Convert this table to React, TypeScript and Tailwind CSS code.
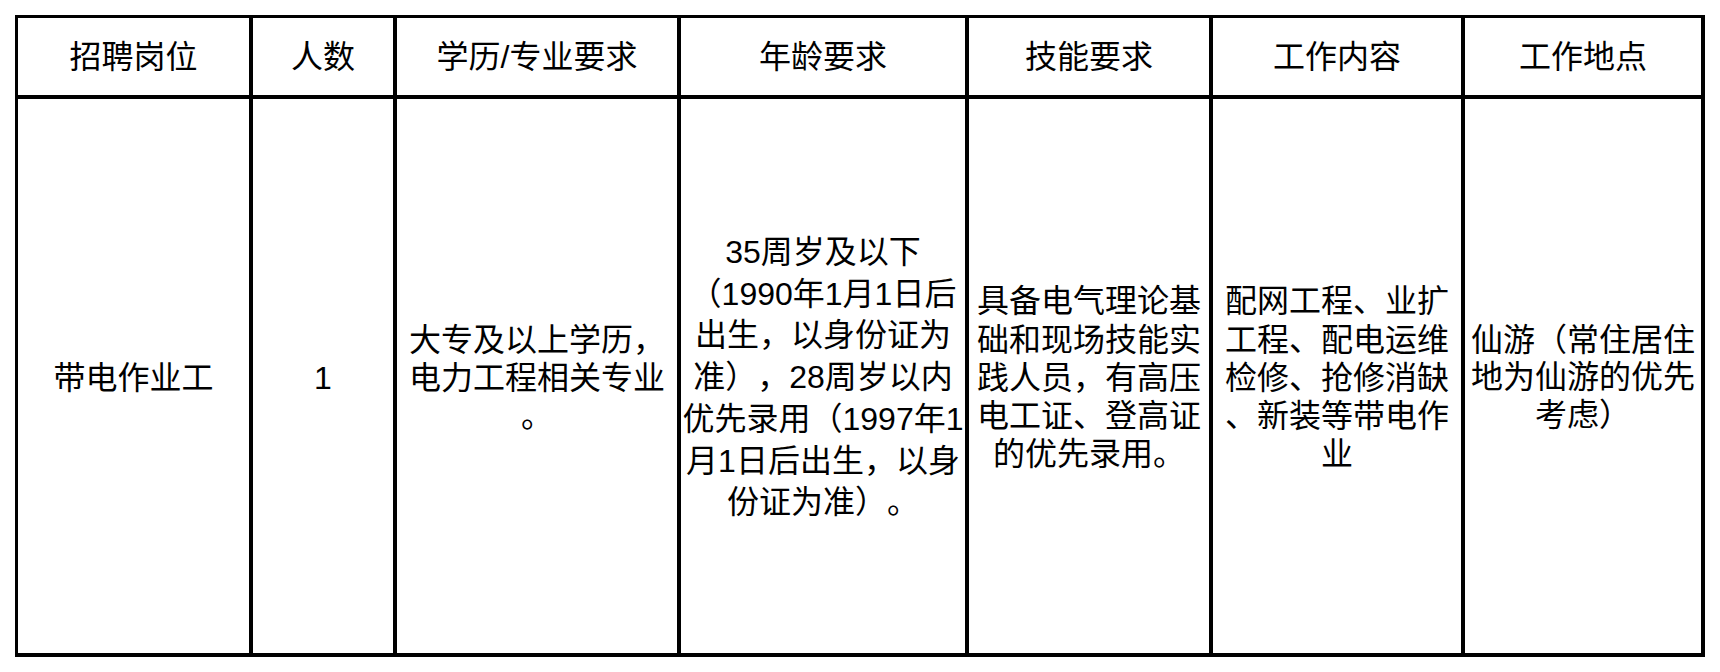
import React from "react";

const FONT = {
  fontFamily: '"Liberation Sans", "Noto Sans CJK SC", sans-serif',
};

function Lines({ items, leading }: { items: string[]; leading: string }) {
  return (
    <div className={`flex flex-col items-center ${leading}`}>
      {items.map((t, i) => (
        <div key={i} className="whitespace-nowrap">
          {t}
        </div>
      ))}
    </div>
  );
}

const headers = ["招聘岗位", "人数", "学历/专业要求", "年龄要求", "技能要求", "工作内容", "工作地点"];

export default function App() {
  const cell =
    "border-r-4 border-b-4 border-black flex flex-col items-center justify-center text-center";
  const body = `${cell} pt-[4px]`;
  return (
    <div className="min-h-[672px] w-[1720px] bg-white text-black [text-spacing-trim:space-all]" style={FONT}>
      <div className="pl-[15px] pt-[15px]">
        <div className="grid w-max grid-cols-[235px_144px_284px_288px_244px_252px_240px] grid-rows-[81px_558px] border-l-[3px] border-t-[3px] border-black text-[32px] leading-[38px]">
          {headers.map((h) => (
            <div key={h} className={cell}>
              <div className="whitespace-nowrap">{h}</div>
            </div>
          ))}
          <div className={body}>
            <div className="whitespace-nowrap">带电作业工</div>
          </div>
          <div className={body}>
            <div>1</div>
          </div>
          <div className={body}>
            <Lines leading="leading-[38px]" items={["大专及以上学历，", "电力工程相关专业", "。"]} />
          </div>
          <div className={body}>
            <Lines
              leading="leading-[41.7px]"
              items={[
                "35周岁及以下",
                "（1990年1月1日后",
                "出生，以身份证为",
                "准），28周岁以内",
                "优先录用（1997年1",
                "月1日后出生，以身",
                "份证为准）。",
              ]}
            />
          </div>
          <div className={body}>
            <Lines
              leading="leading-[38.3px]"
              items={["具备电气理论基", "础和现场技能实", "践人员，有高压", "电工证、登高证", "的优先录用。"]}
            />
          </div>
          <div className={body}>
            <Lines
              leading="leading-[38.3px]"
              items={["配网工程、业扩", "工程、配电运维", "检修、抢修消缺", "、新装等带电作", "业"]}
            />
          </div>
          <div className={body}>
            <Lines leading="leading-[37.5px]" items={["仙游（常住居住", "地为仙游的优先", "考虑）"]} />
          </div>
        </div>
      </div>
    </div>
  );
}
